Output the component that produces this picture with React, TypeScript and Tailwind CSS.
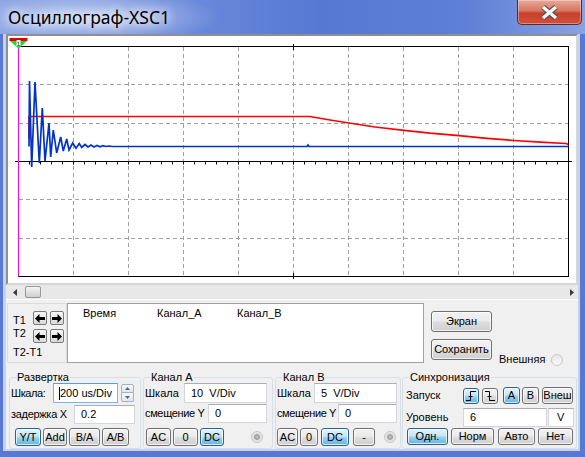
import React, { FC, ReactNode } from 'react';

const btnOff = 'border-[#707070] bg-[linear-gradient(#f2f2f2,#ebebeb_45%,#dddddd_55%,#cfcfcf)]';
const btnOn = 'border-[#2c628b] bg-[linear-gradient(#e5f4fc,#c4e5f6_45%,#98d1ef_55%,#68b3db)]';

interface BtnProps {
  children?: ReactNode;
  on?: boolean;
  className?: string;
}

const Btn: FC<BtnProps> = ({ children, on, className = '' }) => (
  <div
    className={`flex shrink-0 items-center justify-center rounded-[3px] border leading-none shadow-[inset_0_0_0_1px_rgba(255,255,255,0.7)] ${
      on ? btnOn : btnOff
    } ${className}`}
  >
    {children}
  </div>
);

interface FieldProps {
  value: string;
  focus?: boolean;
  className?: string;
}

const Field: FC<FieldProps> = ({ value, focus, className = '' }) => (
  <div
    className={`flex shrink-0 items-center whitespace-pre border bg-white ${
      focus ? 'border-[#7eb4ea] border-t-[#569de5] pl-[5px]' : 'border-[#d3d6dc] border-t-[#abadb3] pl-[6px]'
    } ${className}`}
  >
    {focus && <span className="h-[13px] w-[1px] bg-black" />}
    {value}
  </div>
);

const Led: FC<{ className?: string }> = ({ className = '' }) => (
  <div
    className={`h-[12px] w-[12px] shrink-0 rounded-full border border-[#c4c4c4] bg-[radial-gradient(circle,#c4c4c4_0,#9d9d9d_35%,#dcdcdc_45%,#f6f6f6_100%)] ${className}`}
  />
);

const Group: FC<{ title: string; className?: string; children: ReactNode }> = ({ title, className = '', children }) => (
  <fieldset className={`h-[78px] shrink-0 rounded-[3px] border border-[#d5dfe5] ${className}`}>
    <legend className="ml-[6px] px-[1px] leading-[12px]">{title}</legend>
    {children}
  </fieldset>
);

const Arrow: FC<{ dir: 'l' | 'r' }> = ({ dir }) => (
  <div className="flex h-[14px] w-[14px] items-center justify-center rounded-[2px] border border-[#7a7a7a] bg-[linear-gradient(#f6f6f6,#dadada)]">
    <svg width="10" height="9" viewBox="0 0 10 9">
      <path
        d={dir === 'l' ? 'M0 4.5 L4.5 0 V3 H10 V6 H4.5 V9 Z' : 'M10 4.5 L5.5 0 V3 H0 V6 H5.5 V9 Z'}
        fill="#000"
      />
    </svg>
  </div>
);

const Edge: FC<{ rise?: boolean }> = ({ rise }) => (
  <svg width="10" height="10" viewBox="0 0 10 10">
    <path d={rise ? 'M0 9.5 H4.5 V0.5 H10' : 'M0 0.5 H4.5 V9.5 H10'} stroke="#000" fill="none" />
    <path d="M2.5 5.5 H6.5" stroke="#000" />
  </svg>
);

// waveform samples, in screen px
const blue: [number, number][] = [
  [29, 146.5], [29.5, 81], [31.7, 167], [35, 82], [39.3, 163], [42.3, 108], [45, 161],
  [49, 123], [50.7, 157], [53.3, 130], [56.7, 153], [60.7, 137], [63.3, 151], [66.7, 139],
  [69, 150], [72.7, 143], [76, 148.3], [79.3, 143.5], [81.7, 147.5], [85, 144.5], [88, 147],
  [91, 145], [94, 147], [97, 145.5], [100, 146.8], [103, 145.7], [106, 146.5], [109, 146],
  [112, 146.5], [307, 146.5], [308, 145], [309, 146.5], [568.5, 146.5],
];

const red: [number, number][] = [
  [29, 139], [29, 116.5], [310, 116.5], [330, 120], [349, 123], [375, 127], [404, 130.3],
  [430, 133.2], [459, 135.7], [487, 138.4], [514, 140.5], [540, 142.2], [566, 143.5], [568.5, 144.5],
];

const pts = (p: [number, number][]) => p.map(([x, y]) => `${x},${y}`).join(' ');

const Scope: FC = () => {
  const vx = Array.from({ length: 9 }, (_, i) => 18.5 + 55 * (i + 1));
  const hy = [84.5, 123.5, 199.5, 238.5];
  const ticks = Array.from({ length: 51 }, (_, i) => 18.5 + 11 * i);
  return (
    <svg width={568} height={247} viewBox="8 36 568 247" className="block">
      <rect x={8} y={36} width={568} height={247} fill="#fff" />
      {vx.map((x) => (
        <line key={x} x1={x} x2={x} y1={47} y2={276} stroke="#a0a0a0" strokeDasharray="4 3" />
      ))}
      {hy.map((y) => (
        <line key={y} x1={19} x2={568} y1={y} y2={y} stroke="#a0a0a0" strokeDasharray="4 3" />
      ))}
      <rect x={18.5} y={46.5} width={550} height={230} fill="none" stroke="#000" />
      <line x1={15} x2={572} y1={161.5} y2={161.5} stroke="#000" />
      {ticks.map((x) => (
        <line key={x} x1={x} x2={x} y1={161.5} y2={164.5} stroke="#000" />
      ))}
      <line x1={293.5} x2={293.5} y1={44} y2={50} stroke="#000" />
      <line x1={293.5} x2={293.5} y1={273} y2={279} stroke="#000" />
      <polyline points={pts(red)} fill="none" stroke="#ff0000" strokeWidth={1.7} />
      <polyline points={pts(blue)} fill="none" stroke="#0033cc" strokeWidth={1.7} />
      <line x1={18.5} x2={18.5} y1={41} y2={276.5} stroke="#ff00ff" />
      <rect x={9.5} y={38} width={18} height={3} fill="#e00000" />
      <polygon points="10,41 27,41 18.5,48.5" fill="#19e019" />
      <rect x={16.5} y={40} width={4} height={6} fill="#fff" />
      <text x={18.5} y={45.5} fontSize={6} textAnchor="middle" fill="#00008b" fontFamily="Liberation Sans, sans-serif">
        1
      </text>
    </svg>
  );
};

export default function App() {
  return (
    <div className="flex h-[457px] w-[585px] flex-col overflow-hidden bg-[#5878d2] font-['Liberation_Sans',Arial,sans-serif] text-[11px] leading-[13px] text-black">
      {/* title bar */}
      <div className="flex h-[34px] shrink-0 items-start justify-between bg-[radial-gradient(130px_28px_at_90px_17px,rgba(255,255,255,0.55),transparent),linear-gradient(90deg,#86a0e2,#6c8bdb_30%,#5678d3_55%,#5f80d6_80%,#88a2e2)]">
        <div className="mt-[5px] pl-[8px] font-['Noto_Sans',sans-serif] text-[17.5px] leading-[24px] [text-shadow:0_0_8px_#fff,0_0_12px_#fff]">
          Осциллограф-XSC1
        </div>
        <div className="mr-[3px] flex h-[25px] w-[65px] items-center justify-center rounded-b-[5px] border border-t-0 border-[#5c2a25] bg-[linear-gradient(#e9a99b,#d8735f_45%,#c7402a_55%,#d0503c)] shadow-[inset_0_0_0_1px_rgba(255,255,255,0.35)]">
          <svg width="19" height="15" viewBox="0 0 19 15">
            <path d="M3 2 L16 13 M16 2 L3 13" stroke="#4a4a4a" strokeWidth="5.5" />
            <path d="M3 2 L16 13 M16 2 L3 13" stroke="#f4f4f4" strokeWidth="3.5" />
          </svg>
        </div>
      </div>

      {/* client */}
      <div className="mb-[6px] ml-[3px] mr-[5px] flex flex-1 flex-col border-b-[2px] border-l-[3px] border-r-[2px] border-[#c6d1ee] bg-[#f0f0f0] bg-clip-padding">
        <div className="h-[251px] shrink-0 border-2 border-[#d6d6d6] border-l-[#8f8f8f] border-t-[#8f8f8f]">
          <Scope />
        </div>

        <div className="flex h-[15px] shrink-0 items-center border-b border-white bg-[#e8e8e8]">
          <svg className="ml-[7px]" width="4" height="7" viewBox="0 0 4 7">
            <path d="M4 0 V7 L0 3.5 Z" fill="#3c3c3c" />
          </svg>
          <div className="ml-[8px] h-[12px] w-[16px] rounded-[2px] border border-[#979797] bg-[linear-gradient(#f4f4f4,#e2e2e2_50%,#d0d0d0)]" />
          <svg className="ml-auto mr-[4px]" width="4" height="7" viewBox="0 0 4 7">
            <path d="M0 0 V7 L4 3.5 Z" fill="#3c3c3c" />
          </svg>
        </div>

        {/* cursors */}
        <div className="mt-[3px] flex h-[60px] shrink-0">
          <div className="ml-[1px] flex w-[60px] border border-[#dcdcdc]">
            <div className="flex w-[25px] flex-col pl-[5px] pt-[10px]">
              <span>T1</span>
              <span>T2</span>
              <span className="mt-[6px] whitespace-nowrap">T2-T1</span>
            </div>
            <div className="flex flex-col gap-[4px] pt-[7px]">
              <div className="flex gap-[3px]">
                <Arrow dir="l" />
                <Arrow dir="r" />
              </div>
              <div className="flex gap-[3px]">
                <Arrow dir="l" />
                <Arrow dir="r" />
              </div>
            </div>
          </div>
          <div className="flex w-[357px] items-start border border-[#a0a0a0] bg-white pl-[15px] pt-[3px]">
            <span className="w-[74px]">Время</span>
            <span className="w-[80px]">Канал_А</span>
            <span>Канал_B</span>
          </div>
          <div className="flex flex-1 items-start">
            <div className="ml-[7px] flex flex-col">
              <Btn className="mt-[8px] h-[21px] w-[61px]">Экран</Btn>
              <Btn className="mt-[7px] h-[21px] w-[61px]">Сохранить</Btn>
            </div>
            <div className="ml-[7px] mt-[50px] flex h-[13px] items-center">
              <span>Внешняя</span>
              <div className="ml-[6px] h-[12px] w-[12px] rounded-full border border-[#c8c8c8] bg-[linear-gradient(#e6e6e6,#f8f8f8)]" />
            </div>
          </div>
        </div>

        {/* control groups */}
        <div className="mt-[8px] flex h-[78px] shrink-0">
          <Group title="Развертка" className="ml-[3px] w-[132px]">
            <div className="flex h-[20px] items-center">
              <span className="w-[43px] pl-[1px] tracking-[-0.4px]">Шкала:</span>
              <Field value="200 us/Div" focus className="h-[20px] w-[65px]" />
              <div className="ml-[3px] flex h-[18px] w-[13px] flex-col">
                <div className="flex h-[9px] items-center justify-center rounded-t-[2px] border border-[#a6b1c0] bg-[linear-gradient(#f6f8fa,#dfe6ee)]">
                  <svg width="5" height="3" viewBox="0 0 5 3">
                    <path d="M0 3 L2.5 0 L5 3 Z" fill="#4f6384" />
                  </svg>
                </div>
                <div className="flex h-[9px] items-center justify-center rounded-b-[2px] border border-t-0 border-[#a6b1c0] bg-[linear-gradient(#f6f8fa,#dfe6ee)]">
                  <svg width="5" height="3" viewBox="0 0 5 3">
                    <path d="M0 0 L2.5 3 L5 0 Z" fill="#4f6384" />
                  </svg>
                </div>
              </div>
            </div>
            <div className="mt-[2px] flex h-[19px] items-center">
              <span className="w-[64px] whitespace-nowrap pl-[1px] tracking-[-0.3px]">задержка X</span>
              <Field value="0.2" className="h-[19px] w-[61px]" />
            </div>
            <div className="mt-[4px] flex h-[18px]">
              <Btn on className="ml-[5px] w-[26px]">Y/T</Btn>
              <Btn className="ml-[2px] w-[24px]">Add</Btn>
              <Btn className="ml-[2px] w-[31px]">B/A</Btn>
              <Btn className="ml-[2px] w-[27px]">A/B</Btn>
            </div>
          </Group>

          <Group title="Канал А" className="ml-[2px] w-[130px]">
            <div className="flex h-[20px] items-center">
              <span className="w-[40px] pl-[1px]">Шкала</span>
              <Field value="10  V/Div" className="h-[20px] w-[83px]" />
            </div>
            <div className="mt-[1px] flex h-[19px] items-center">
              <span className="w-[64px] whitespace-nowrap pl-[1px] tracking-[-0.35px]">смещение Y</span>
              <Field value="0" className="h-[19px] w-[59px]" />
            </div>
            <div className="mt-[5px] flex h-[18px] items-center">
              <Btn className="ml-[2px] h-[18px] w-[25px]">AC</Btn>
              <Btn className="ml-[2px] h-[18px] w-[25px]">0</Btn>
              <Btn on className="ml-[2px] h-[18px] w-[24px]">DC</Btn>
              <Led className="ml-[27px]" />
            </div>
          </Group>

          <Group title="Канал B" className="ml-[2px] w-[126px]">
            <div className="flex h-[20px] items-center">
              <span className="w-[38px] pl-[1px]">Шкала</span>
              <Field value="5  V/Div" className="h-[20px] w-[83px]" />
            </div>
            <div className="mt-[1px] flex h-[19px] items-center">
              <span className="w-[62px] whitespace-nowrap pl-[1px] tracking-[-0.4px]">смещение Y</span>
              <Field value="0" className="h-[19px] w-[59px]" />
            </div>
            <div className="mt-[5px] flex h-[18px] items-center">
              <Btn className="ml-[1px] h-[18px] w-[21px]">AC</Btn>
              <Btn className="ml-[2px] h-[18px] w-[18px]">0</Btn>
              <Btn on className="ml-[3px] h-[18px] w-[28px]">DC</Btn>
              <Btn className="ml-[4px] h-[18px] w-[22px]">-</Btn>
              <Led className="ml-[9px]" />
            </div>
          </Group>

          <Group title="Синхронизация" className="ml-[1px] w-[175px]">
            <div className="mt-[4px] flex h-[17px] items-center">
              <span className="w-[60px] pl-[3px]">Запуск</span>
              <Btn on className="h-[16px] w-[16px]">
                <Edge rise />
              </Btn>
              <Btn className="ml-[3px] h-[16px] w-[16px]">
                <Edge />
              </Btn>
              <Btn on className="ml-[5px] h-[17px] w-[17px]">A</Btn>
              <Btn className="ml-[2px] h-[17px] w-[17px]">B</Btn>
              <Btn className="ml-[3px] h-[17px] w-[31px]">Внеш</Btn>
            </div>
            <div className="mt-[4px] flex h-[19px] items-center">
              <span className="w-[60px] pl-[3px]">Уровень</span>
              <Field value="6" className="h-[19px] w-[84px]" />
              <Field value="V" className="ml-[1px] h-[19px] w-[26px] !pl-[8px]" />
            </div>
            <div className="mt-[1px] flex h-[17px]">
              <Btn on className="ml-[4px] w-[41px]">Одн.</Btn>
              <Btn className="ml-[3px] w-[43px]">Норм</Btn>
              <Btn className="ml-[4px] w-[37px]">Авто</Btn>
              <Btn className="ml-[3px] w-[35px]">Нет</Btn>
            </div>
          </Group>
        </div>
      </div>
    </div>
  );
}
